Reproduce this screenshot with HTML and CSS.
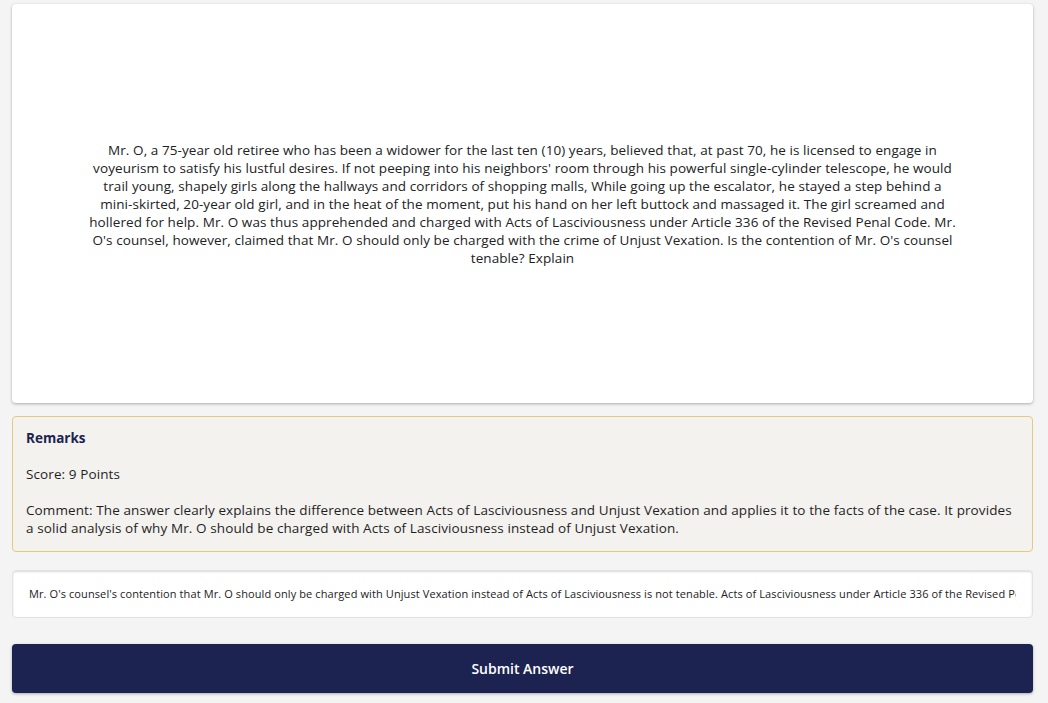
FILE: index.html
```html
<!DOCTYPE html>
<html lang="en">
<head>
<meta charset="utf-8">
<title>Question</title>
<link rel="stylesheet" href="styles.css">
</head>
<body>
<main class="page">
  <section class="question-card">
    <p class="question-text">Mr. O, a 75-year old retiree who has been a widower for the last ten (10) years, believed that, at past 70, he is licensed to engage in voyeurism to satisfy his lustful desires. If not peeping into his neighbors' room through his powerful single-cylinder telescope, he would trail young, shapely girls along the hallways and corridors of shopping malls, While going up the escalator, he stayed a step behind a mini-skirted, 20-year old girl, and in the heat of the moment, put his hand on her left buttock and massaged it. The girl screamed and hollered for help. Mr. O was thus apprehended and charged with Acts of Lasciviousness under Article 336 of the Revised Penal Code. Mr. O's counsel, however, claimed that Mr. O should only be charged with the crime of Unjust Vexation. Is the contention of Mr. O's counsel tenable? Explain</p>
  </section>
  <section class="remarks">
    <h3 class="remarks-title">Remarks</h3>
    <p class="remarks-line">Score: 9 Points</p>
    <p class="remarks-line">Comment: The answer clearly explains the difference between Acts of Lasciviousness and Unjust Vexation and applies it to the facts of the case. It provides a solid analysis of why Mr. O should be charged with Acts of Lasciviousness instead of Unjust Vexation.</p>
  </section>
  <input class="answer-input" type="text" value="Mr. O's counsel's contention that Mr. O should only be charged with Unjust Vexation instead of Acts of Lasciviousness is not tenable. Acts of Lasciviousness under Article 336 of the Revised Penal Code is committed by any person who shall commit any act of lasciviousness upon other persons of either sex.">
  <button class="submit-btn" type="button">Submit Answer</button>
</main>
</body>
</html>
```
FILE: styles.css
```css
* { box-sizing: border-box; }
html, body { margin: 0; padding: 0; }
body {
  background: #f4f4f4;
  font-family: "Open Sans", "Noto Sans", sans-serif;
  color: #1f1f1f;
}
.page {
  padding: 4px 15px 10px 12px;
  display: flex;
  flex-direction: column;
}
.question-card {
  background: #fff;
  border-radius: 4px;
  box-shadow: 0 1px 3px rgba(0,0,0,0.3);
  height: 399px;
  display: flex;
  align-items: center;
  justify-content: center;
  padding: 0 76px;
}
.question-text {
  margin: 0;
  text-align: center;
  font-size: 13.5px;
  letter-spacing: 0.08px;
  line-height: 18px;
  color: #222;
}
.remarks {
  margin-top: 13px;
  background: #f3f2ef;
  border: 1px solid #e5c97f;
  border-radius: 4px;
  padding: 12px 14px 13px 13px;
  height: 136px;
}
.remarks-title {
  margin: 0;
  font-size: 13.5px;
  font-weight: 700;
  line-height: 18px;
  color: #1c2350;
}
.remarks-line {
  margin: 18px 0 0;
  font-size: 13.5px;
  letter-spacing: 0.1px;
  line-height: 18px;
  color: #1f1f1f;
}
.answer-input {
  margin-top: 18px;
  height: 48px;
  width: 100%;
  background: #fff;
  border: 1px solid #e2e2e2;
  border-radius: 4px;
  box-shadow: inset 0 1px 2px rgba(0,0,0,0.15);
  padding: 0 16px 1px;
  font-family: inherit;
  font-size: 11px;
  letter-spacing: 0.1px;
  color: #222;
  outline: none;
}
.submit-btn {
  margin-top: 26px;
  height: 49px;
  width: 100%;
  background: #1c2350;
  border: none;
  border-radius: 4px;
  box-shadow: 0 1px 3px rgba(0,0,0,0.3);
  color: #fff;
  font-family: inherit;
  font-size: 14px;
  font-weight: 600;
}
```
